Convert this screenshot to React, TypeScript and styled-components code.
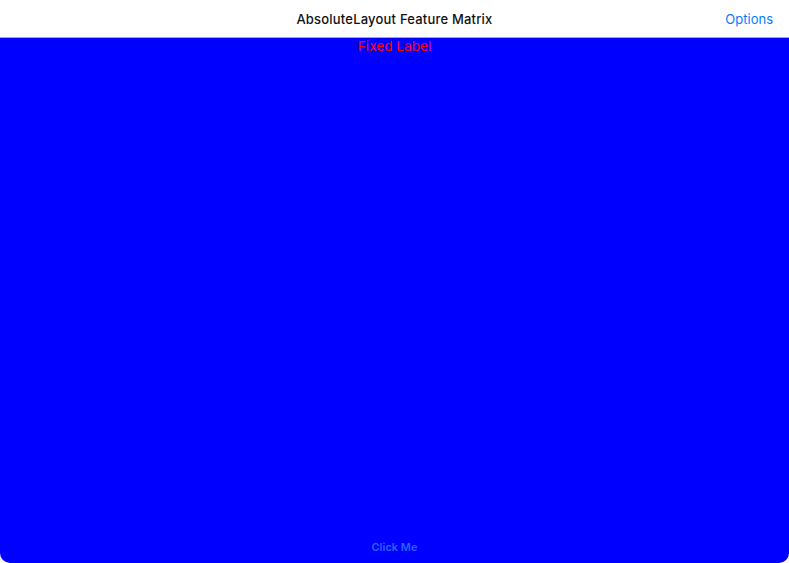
import React from "react";
import styled, { createGlobalStyle } from "styled-components";

const GlobalStyle = createGlobalStyle`
  html, body {
    margin: 0;
    padding: 0;
    background: #ffffff;
    font-family: Inter, "Liberation Sans", Arial, sans-serif;
  }
`;

const Screen = styled.div`
  width: 789px;
  height: 563px;
  display: flex;
  flex-direction: column;
  background: #ffffff;
`;

const NavBar = styled.header`
  height: 37px;
  flex: none;
  display: grid;
  grid-template-columns: 1fr auto 1fr;
  align-items: center;
  border-bottom: 1px solid #a8a8b0;
  background: #ffffff;
`;

const NavTitle = styled.div`
  grid-column: 2;
  font-size: 13px;
  font-weight: 500;
  color: #111111;
  letter-spacing: 0.2px;
`;

const NavAction = styled.button`
  grid-column: 3;
  justify-self: end;
  margin-right: 16px;
  border: none;
  background: none;
  padding: 0;
  font-family: inherit;
  font-size: 13px;
  color: #0a7aff;
  cursor: pointer;
`;

const Canvas = styled.main`
  flex: 1;
  display: flex;
  flex-direction: column;
  align-items: center;
  justify-content: space-between;
  background: #0000ff;
  border-radius: 0 0 10px 10px;
  padding: 0 0 9px;
`;

const FixedLabel = styled.div`
  font-size: 13.6px;
  color: #ff0000;
  line-height: 16px;
`;

const ClickButton = styled.button`
  border: none;
  background: none;
  padding: 0;
  font-family: inherit;
  font-size: 11px;
  font-weight: 600;
  color: #2b63ff;
  cursor: pointer;
`;

export default function App() {
  return (
    <>
      <GlobalStyle />
      <Screen>
        <NavBar>
          <NavTitle>AbsoluteLayout Feature Matrix</NavTitle>
          <NavAction>Options</NavAction>
        </NavBar>
        <Canvas>
          <FixedLabel>Fixed Label</FixedLabel>
          <ClickButton>Click Me</ClickButton>
        </Canvas>
      </Screen>
    </>
  );
}
